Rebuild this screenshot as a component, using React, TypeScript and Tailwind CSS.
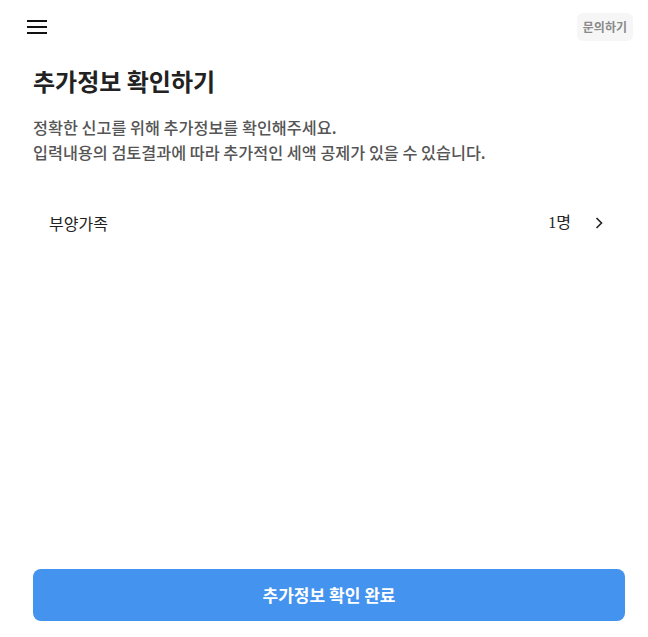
const font = { fontFamily: '"Noto Sans CJK KR", "Noto Sans", sans-serif' }

function MenuIcon() {
  return (
    <svg width="20" height="16" viewBox="0 0 20 16" aria-hidden>
      <rect x="0" y="1" width="20" height="2" fill="#111" />
      <rect x="0" y="7" width="20" height="2" fill="#111" />
      <rect x="0" y="13" width="20" height="2" fill="#111" />
    </svg>
  )
}

function Chevron() {
  return (
    <svg width="8" height="14" viewBox="0 0 8 14" aria-hidden>
      <path d="M1.5 2 L6.5 7 L1.5 12" fill="none" stroke="#222" strokeWidth="1.6" />
    </svg>
  )
}

export default function App() {
  return (
    <div className="flex h-screen flex-col bg-white" style={font}>
      <header className="flex h-[54px] items-center justify-between pl-[27px] pr-[15px]">
        <button type="button" className="flex h-5 w-5 items-center">
          <MenuIcon />
        </button>
        <button
          type="button"
          className="rounded-md bg-[#f6f6f6] px-[6px] py-[5px] text-[12px] font-bold leading-[18px] text-[#8a8a8a]"
        >
          문의하기
        </button>
      </header>

      <main className="flex flex-1 flex-col px-[33px]">
        <h1 className="mt-[11px] text-[24px] font-bold leading-[32px] text-[#222]">
          추가정보 확인하기
        </h1>
        <p className="mt-[18px] text-[16.25px] font-medium leading-[25px] text-[#555]">
          정확한 신고를 위해 추가정보를 확인해주세요.
          <br />
          입력내용의 검토결과에 따라 추가적인 세액 공제가 있을 수 있습니다.
        </p>

        <button
          type="button"
          className="mt-[33px] flex h-[50px] items-center justify-between pl-[16px] pr-[12px] text-[16px] text-[#222]"
          style={{ fontFamily: '"Liberation Serif", "Noto Sans CJK KR", serif' }}
        >
          <span style={font}>부양가족</span>
          <span className="flex items-center gap-[24px]">
            <span>1명</span>
            <Chevron />
          </span>
        </button>

        <div className="flex-1" />

        <button
          type="button"
          className="mb-[16px] h-[52px] w-[592px] rounded-lg bg-[#4493ef] text-[17px] font-bold text-white"
        >
          추가정보 확인 완료
        </button>
      </main>
    </div>
  )
}
